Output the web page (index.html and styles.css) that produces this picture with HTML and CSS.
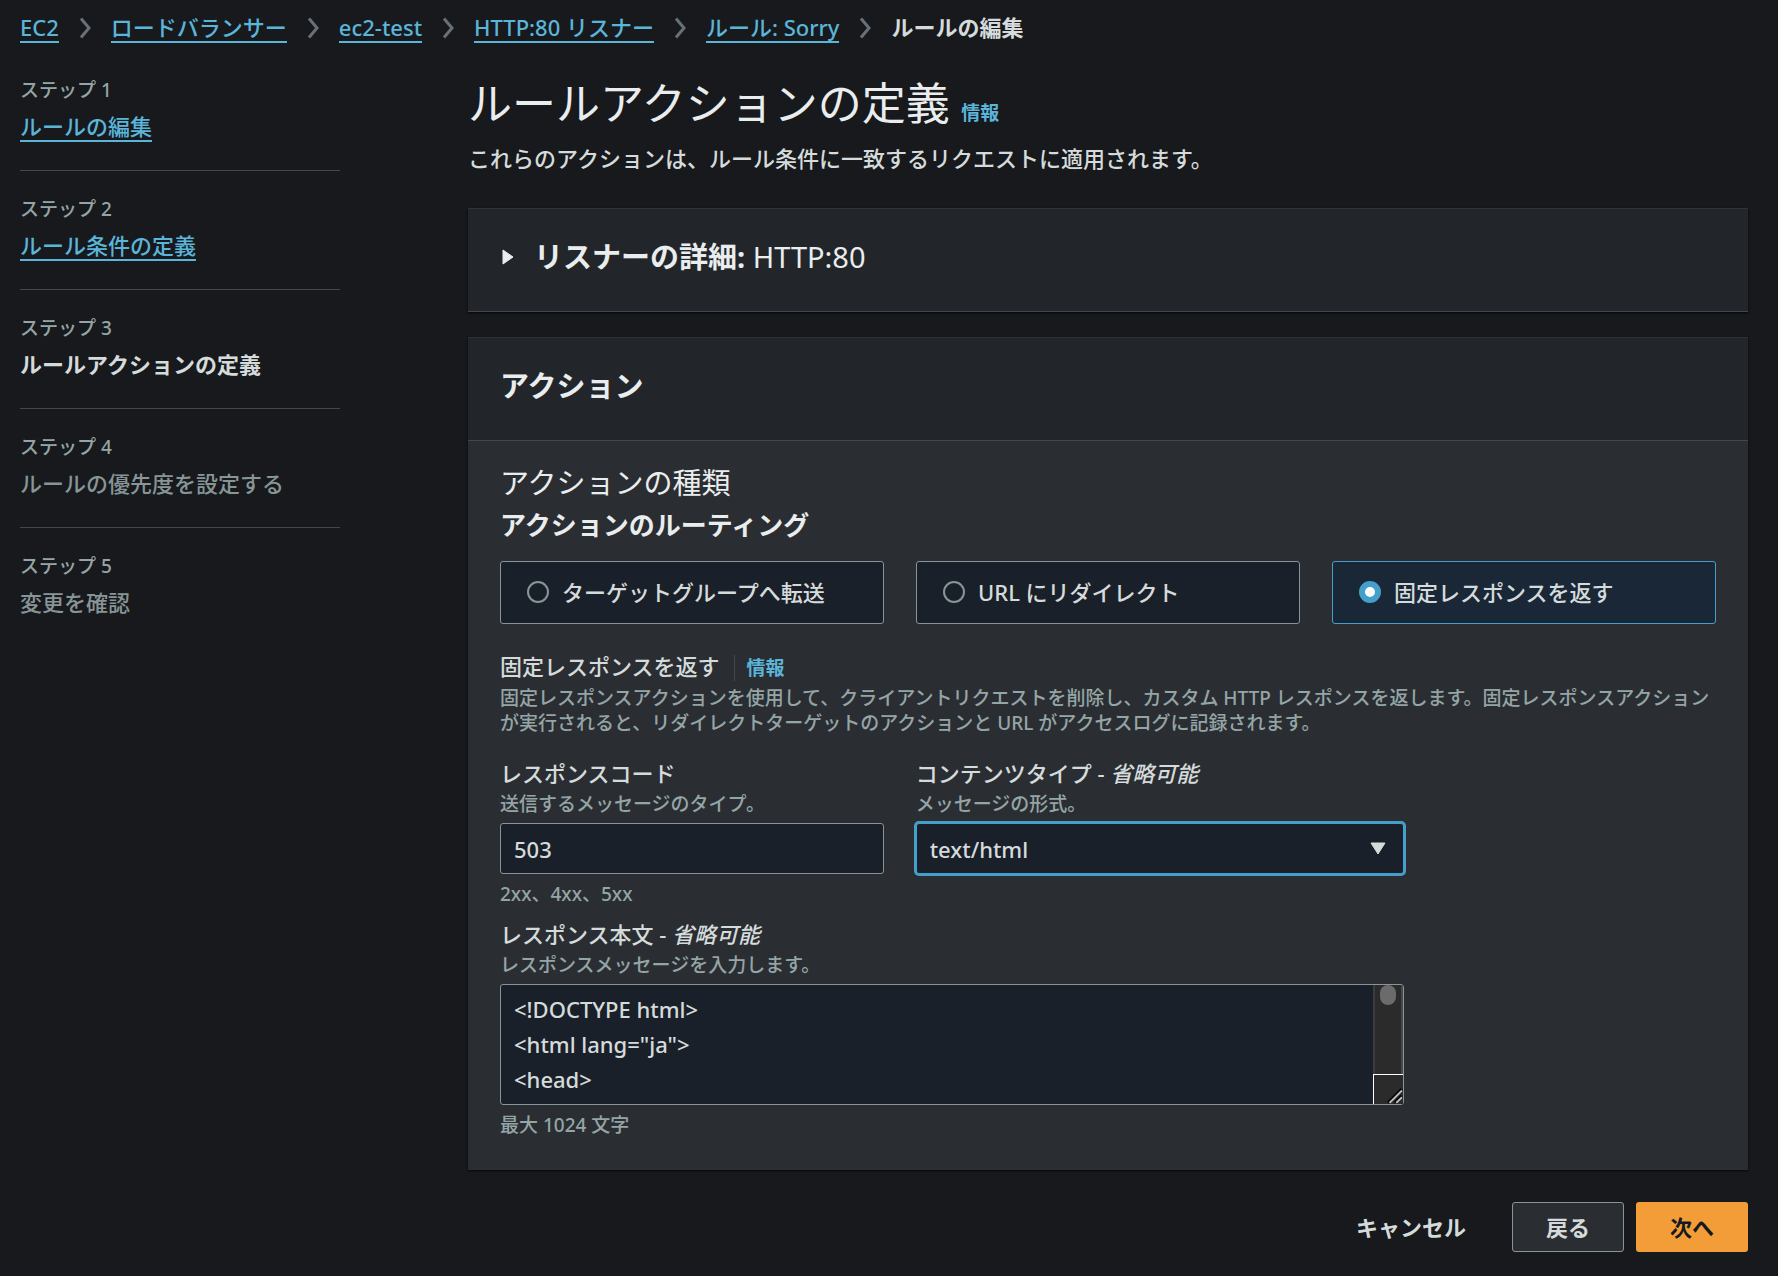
FILE: index.html
```html
<!DOCTYPE html>
<html lang="ja">
<head>
    <meta charset="UTF-8">
    <meta name="viewport" content="width=device-width, initial-scale=1.0">
    <title>ルールの編集</title>
    <link rel="stylesheet" href="styles.css">
</head>
<body>
    <nav class="breadcrumbs">
        <a href="#">EC2</a>
        <svg class="chevron" viewBox="0 0 12 22"><path d="M2 1.5 L10 11 L2 20.5"/></svg>
        <a href="#">ロードバランサー</a>
        <svg class="chevron" viewBox="0 0 12 22"><path d="M2 1.5 L10 11 L2 20.5"/></svg>
        <a href="#">ec2-test</a>
        <svg class="chevron" viewBox="0 0 12 22"><path d="M2 1.5 L10 11 L2 20.5"/></svg>
        <a href="#">HTTP:80 リスナー</a>
        <svg class="chevron" viewBox="0 0 12 22"><path d="M2 1.5 L10 11 L2 20.5"/></svg>
        <a href="#">ルール: Sorry</a>
        <svg class="chevron" viewBox="0 0 12 22"><path d="M2 1.5 L10 11 L2 20.5"/></svg>
        <span class="current">ルールの編集</span>
    </nav>

    <div class="wizard">
        <ol class="steps">
            <li>
                <span class="step-number">ステップ 1</span>
                <a class="step-name" href="#">ルールの編集</a>
            </li>
            <li>
                <span class="step-number">ステップ 2</span>
                <a class="step-name" href="#">ルール条件の定義</a>
            </li>
            <li>
                <span class="step-number">ステップ 3</span>
                <span class="step-name active">ルールアクションの定義</span>
            </li>
            <li>
                <span class="step-number">ステップ 4</span>
                <span class="step-name">ルールの優先度を設定する</span>
            </li>
            <li>
                <span class="step-number">ステップ 5</span>
                <span class="step-name">変更を確認</span>
            </li>
        </ol>

        <main class="content">
            <header class="page-header">
                <h1>ルールアクションの定義 <a class="info" href="#">情報</a></h1>
                <p>これらのアクションは、ルール条件に一致するリクエストに適用されます。</p>
            </header>

            <form>
                <section class="card">
                    <h2 class="card-header">
                        <button class="expander" type="button" aria-expanded="false">
                            <svg class="caret" viewBox="0 0 12 16"><path d="M1 1 L11 8 L1 15 Z"/></svg>
                            <span>リスナーの詳細: <span class="light">HTTP:80</span></span>
                        </button>
                    </h2>
                </section>

                <section class="card">
                    <h2 class="card-header divided">アクション</h2>
                    <div class="card-body">
                        <h3 class="type-title">アクションの種類</h3>
                        <h4 class="routing-title">アクションのルーティング</h4>
                        <div class="tiles">
                            <label class="tile"><input type="radio" name="action">ターゲットグループへ転送</label>
                            <label class="tile"><input type="radio" name="action">URL にリダイレクト</label>
                            <label class="tile selected"><input type="radio" name="action" checked>固定レスポンスを返す</label>
                        </div>

                        <div class="fixed-title">
                            <span>固定レスポンスを返す</span>
                            <a class="info" href="#">情報</a>
                        </div>
                        <p class="description">固定レスポンスアクションを使用して、クライアントリクエストを削除し、カスタム HTTP レスポンスを返します。固定レスポンスアクションが実行されると、リダイレクトターゲットのアクションと URL がアクセスログに記録されます。</p>

                        <div class="fields">
                            <div class="field">
                                <label for="code">レスポンスコード</label>
                                <p class="hint">送信するメッセージのタイプ。</p>
                                <input class="control" id="code" type="text" value="503">
                                <p class="constraint">2xx、4xx、5xx</p>
                            </div>
                            <div class="field">
                                <label for="type">コンテンツタイプ - <i>省略可能</i></label>
                                <p class="hint">メッセージの形式。</p>
                                <div class="select-wrap">
                                    <select class="control focused" id="type">
                                        <option>text/html</option>
                                    </select>
                                    <svg class="arrow" viewBox="0 0 16 13"><path d="M1 1 L15 1 L8 12 Z"/></svg>
                                </div>
                            </div>
                            <div class="field wide">
                                <label for="body">レスポンス本文 - <i>省略可能</i></label>
                                <p class="hint">レスポンスメッセージを入力します。</p>
                                <div class="textarea-wrap">
                                    <textarea class="control" id="body" rows="3">
&lt;!DOCTYPE html&gt;
&lt;html lang="ja"&gt;
&lt;head&gt;</textarea>
                                    <div class="scrollbar">
                                        <div class="track"><div class="thumb"></div></div>
                                        <svg class="grip" viewBox="0 0 30 30">
                                            <path class="grip-shadow" d="M15 29 L29 15 M22 29 L29 22"/>
                                            <path d="M16 29 L29 16 M23 29 L29 23"/>
                                        </svg>
                                    </div>
                                </div>
                                <p class="constraint">最大 1024 文字</p>
                            </div>
                        </div>
                    </div>
                </section>

                <div class="actions">
                    <button class="btn link" type="button">キャンセル</button>
                    <button class="btn normal" type="button">戻る</button>
                    <button class="btn primary" type="submit">次へ</button>
                </div>
            </form>
        </main>
    </div>
</body>
</html>
```
FILE: styles.css
```css
* {
    box-sizing: border-box;
}
body {
    margin: 0;
    background-color: #17191d;
    color: #d5dbdb;
    font-family: "Noto Sans", "Noto Sans CJK JP", sans-serif;
    font-size: 22px;
    font-weight: 500;
    line-height: 28px;
}
h1, h2, h3, h4, p, ol {
    margin: 0;
    padding: 0;
}
button, input, select, textarea {
    font: inherit;
    color: inherit;
}
a {
    color: #5ab5d8;
    text-decoration: none;
}

/* breadcrumbs */
.breadcrumbs {
    display: flex;
    align-items: flex-start;
    gap: 20px;
    padding: 13px 20px 0;
}
.breadcrumbs a {
    border-bottom: 2px solid #5ab5d8;
}
.chevron {
    width: 12px;
    height: 22px;
    margin-top: 4px;
    fill: none;
    stroke: #687078;
    stroke-width: 3;
}
.current {
    font-weight: bold;
}

/* layout */
.wizard {
    display: flex;
    gap: 128px;
    padding: 32px 30px 0 20px;
}
.steps {
    flex: 0 0 320px;
    padding-top: 3px;
    list-style: none;
}
.steps li {
    display: flex;
    flex-direction: column;
    align-items: flex-start;
    gap: 10px;
    padding: 26px 0 28px;
    border-bottom: 1px solid #414750;
}
.steps li:first-child {
    padding-top: 0;
}
.steps li:last-child {
    border-bottom: none;
}
.step-number {
    font-size: 19px;
    line-height: 24px;
    color: #95a5a6;
}
.step-name {
    color: #879596;
    border-bottom: 2px solid transparent;
}
a.step-name {
    color: #5ab5d8;
    border-color: #5ab5d8;
}
.step-name.active {
    color: #d5dbdb;
    font-weight: bold;
}
.content {
    flex: 1;
    min-width: 0;
}

/* page header */
.page-header {
    padding-bottom: 36px;
}
.page-header h1 {
    font-size: 44px;
    line-height: 56px;
    font-weight: normal;
    color: #eaeded;
    padding-bottom: 3px;
}
.info {
    font-size: 19px;
    font-weight: bold;
}

/* cards */
.card {
    margin-bottom: 25px;
    background-color: #2a2e33;
    border-top: 1px solid #2e3338;
    box-shadow: 0 1px 2px rgba(0, 0, 0, 0.8);
}
.card-header {
    padding: 30px 32px 36px;
    background-color: #22262b;
    border-bottom: 1px solid #414750;
    font-size: 29px;
    line-height: 36px;
    color: #eaeded;
}
.expander {
    display: flex;
    align-items: center;
    gap: 20px;
    padding: 0 0 0 2px;
    border: none;
    background: none;
    text-align: left;
    cursor: pointer;
}
.caret {
    width: 12px;
    height: 16px;
    fill: #eaeded;
    stroke: #eaeded;
    stroke-width: 1;
    stroke-linejoin: round;
}
.light {
    font-weight: normal;
}
.card-body {
    padding: 24px 32px 33px;
}
.type-title {
    font-size: 29px;
    line-height: 36px;
    font-weight: normal;
    color: #eaeded;
}
.routing-title {
    font-size: 26px;
    line-height: 36px;
    padding: 6px 0 18px;
    color: #eaeded;
}

/* action tiles */
.tiles {
    display: grid;
    grid-template-columns: repeat(3, 1fr);
    gap: 32px;
}
.tile {
    display: flex;
    align-items: center;
    gap: 13px;
    padding: 16px 26px 17px;
    border: 1px solid #879596;
    border-radius: 3px;
    background-color: #1a2029;
}
.tile.selected {
    border-color: #44a0cb;
    background-color: #192737;
}
.tile input {
    appearance: none;
    width: 22px;
    height: 22px;
    margin: 0;
    border: 2px solid #879596;
    border-radius: 50%;
}
.tile input:checked {
    border: 6px solid #44a0cb;
    background-color: #fff;
}

/* fixed response */
.fixed-title {
    display: flex;
    align-items: baseline;
    padding-top: 28px;
}
.fixed-title .info {
    margin-left: 14px;
    padding-left: 12px;
    border-left: 1px solid #414750;
    line-height: 26px;
}
.description {
    padding: 5px 0 23px;
    font-size: 19px;
    line-height: 25px;
    color: #95a5a6;
}
.fields {
    display: grid;
    grid-template-columns: 11fr 14fr;
    column-gap: 32px;
    row-gap: 14px;
    max-width: 904px;
}
.field {
    display: flex;
    flex-direction: column;
}
.wide {
    grid-column: span 2;
}
.hint, .constraint {
    font-size: 19px;
    line-height: 24px;
    color: #95a5a6;
}
.hint {
    padding: 5px 0 7px;
}
.constraint {
    padding-top: 8px;
}
.control {
    display: block;
    width: 100%;
    height: 51px;
    padding: 7px 13px;
    border: 1px solid #879596;
    border-radius: 3px;
    background-color: #1a2029;
    outline: none;
}
.select-wrap, .textarea-wrap {
    position: relative;
}
select.control {
    appearance: none;
}
.focused {
    border-color: #44a0cb;
    box-shadow: 0 0 0 2px #44a0cb;
}
.arrow {
    position: absolute;
    right: 18px;
    top: 19px;
    width: 16px;
    height: 13px;
    fill: #d5dbdb;
    stroke: #d5dbdb;
    stroke-width: 1;
    stroke-linejoin: round;
    pointer-events: none;
}
textarea.control {
    height: 121px;
    line-height: 35px;
    resize: none;
}

/* scrollbar over the right edge of the textarea */
.scrollbar {
    position: absolute;
    top: 1px;
    right: 1px;
    bottom: 1px;
    width: 30px;
    display: flex;
    flex-direction: column;
    background-color: #2b2b2b;
    pointer-events: none;
}
.track {
    flex: 1;
    border-left: 2px solid #3c3c3c;
    border-right: 2px solid #4a4a4a;
}
.thumb {
    width: 16px;
    height: 20px;
    margin: 0 auto;
    border-radius: 8px;
    background-color: #6b6b6b;
}
.grip {
    height: 30px;
    border-top: 1px solid #fff;
    border-left: 1px solid #fff;
    fill: none;
    stroke: #bbb;
    stroke-width: 2;
}
.grip-shadow {
    stroke: #000;
    stroke-width: 4;
}

/* footer buttons */
.actions {
    display: flex;
    justify-content: flex-end;
    gap: 12px;
    padding: 7px 0 24px;
}
.btn {
    height: 50px;
    padding: 0 33px;
    border: 1px solid transparent;
    border-radius: 3px;
    font-weight: bold;
    cursor: pointer;
}
.btn.link {
    background: none;
}
.btn.normal {
    border-color: #879596;
    background-color: #2a2e33;
}
.btn.primary {
    background-color: #f29d38;
    color: #16191f;
}
```
